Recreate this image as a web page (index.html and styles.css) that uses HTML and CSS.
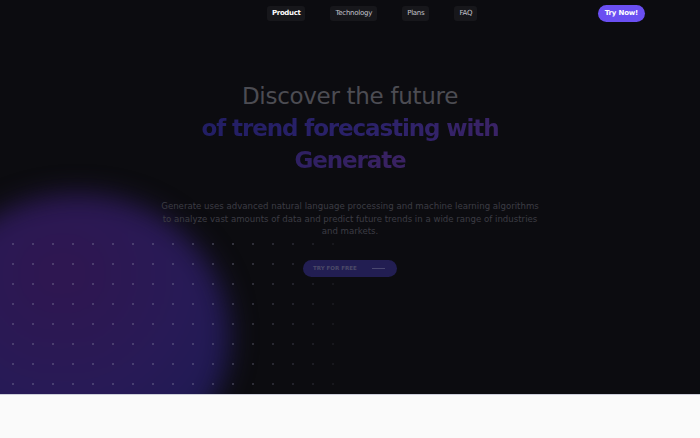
FILE: index.html
```html
<!DOCTYPE html>
<html lang="en">
<head>
<meta charset="utf-8">
<title>Generate</title>
<link rel="stylesheet" href="styles.css">
</head>
<body>
<section class="hero">
  <div class="blob"></div>
  <div class="dots"></div>
  <nav class="nav">
    <ul class="links">
      <li><a class="link active" href="#">Product</a></li>
      <li><a class="link" href="#">Technology</a></li>
      <li><a class="link" href="#">Plans</a></li>
      <li><a class="link" href="#">FAQ</a></li>
    </ul>
    <a class="try" href="#">Try Now!</a>
  </nav>
  <div class="content">
    <h1 class="title">
      <span class="line1">Discover the future</span>
      <span class="line2">of trend forecasting with</span>
      <span class="line3">Generate</span>
    </h1>
    <p class="lead">Generate uses advanced natural language processing and machine learning algorithms<br>to analyze vast amounts of data and predict future trends in a wide range of industries<br>and markets.</p>
    <a class="cta" href="#"><span>TRY FOR FREE</span><i class="arrow"></i></a>
  </div>
</section>
<section class="below"></section>
</body>
</html>
```
FILE: styles.css
```css
* { box-sizing: border-box; }
html, body { margin: 0; padding: 0; }
body {
  background: #0c0c10;
  font-family: "DejaVu Sans", "Noto Sans", sans-serif;
  -webkit-font-smoothing: antialiased;
  overflow: hidden;
}
.hero {
  position: relative;
  height: 394px;
  background: #0c0c10;
  overflow: hidden;
}
.blob {
  position: absolute;
  left: -75px;
  top: 194px;
  width: 305px;
  height: 285px;
  border-radius: 50%;
  background: radial-gradient(circle at 45% 28%, #2f1650 0%, #281a56 45%, #201a54 70%, rgba(30,26,80,0) 100%);
  filter: blur(13px);
}
.dots {
  position: absolute;
  left: 0;
  top: 234px;
  width: 352px;
  height: 160px;
  background-image: radial-gradient(circle, rgba(150,150,175,0.3) 0.8px, transparent 1.2px);
  background-size: 20px 20px;
  background-position: 3px 0;
  -webkit-mask-image: linear-gradient(90deg, #000 65%, rgba(0,0,0,0.15) 100%);
  mask-image: linear-gradient(90deg, #000 65%, rgba(0,0,0,0.15) 100%);
}
.nav {
  position: relative;
  display: flex;
  align-items: center;
  height: 27px;
  padding: 0 55px 0 267px;
}
.links {
  display: flex;
  gap: 25px;
  list-style: none;
  margin: 0;
  padding: 0;
}
.link {
  display: block;
  height: 15px;
  line-height: 15px;
  padding: 0 5px;
  border-radius: 3px;
  background: #17171b;
  color: #c4c4cc;
  font-size: 7px;
  letter-spacing: -0.25px;
  text-decoration: none;
}
.link.active { color: #ffffff; font-weight: bold; letter-spacing: -0.35px; }
.try {
  margin-left: auto;
  height: 17px;
  line-height: 17px;
  padding: 0 7px;
  border-radius: 9px;
  background: #6a4ff2;
  color: #fff;
  font-size: 7px;
  letter-spacing: -0.2px;
  font-weight: bold;
  text-decoration: none;
}
.content {
  position: relative;
  display: flex;
  flex-direction: column;
  align-items: center;
  padding-top: 53px;
}
.title {
  margin: 0;
  display: flex;
  flex-direction: column;
  align-items: center;
  font-size: 23px;
  line-height: 32px;
  font-weight: normal;
  letter-spacing: -0.3px;
}
.line1 { color: #4c4c53; }
.line2, .line3 {
  font-weight: bold;
  letter-spacing: -1.1px;
  background: linear-gradient(90deg, #221e64 0%, #2c226a 60%, #3a2366 100%);
  -webkit-background-clip: text;
  background-clip: text;
  color: transparent;
}
.line3 { background: linear-gradient(90deg, #2e2062, #3a2262); -webkit-background-clip: text; background-clip: text; }
.lead {
  margin: 24px 0 0;
  width: 420px;
  text-align: center;
  font-size: 8.6px;
  line-height: 12.5px;
  color: #3c3c44;
}
.cta {
  margin-top: 22px;
  display: flex;
  align-items: center;
  width: 94px;
  height: 17px;
  padding: 0 12px 0 10px;
  border-radius: 9px;
  background: #221e52;
  color: #4c4a68;
  font-size: 5.5px;
  font-weight: bold;
  text-decoration: none;
}
.arrow {
  margin-left: auto;
  width: 13px;
  height: 1px;
  background: #4a4870;
}
.below {
  height: 44px;
  background: #fafafa;
  border-top: 1px solid #cdcfdb;
}
```
